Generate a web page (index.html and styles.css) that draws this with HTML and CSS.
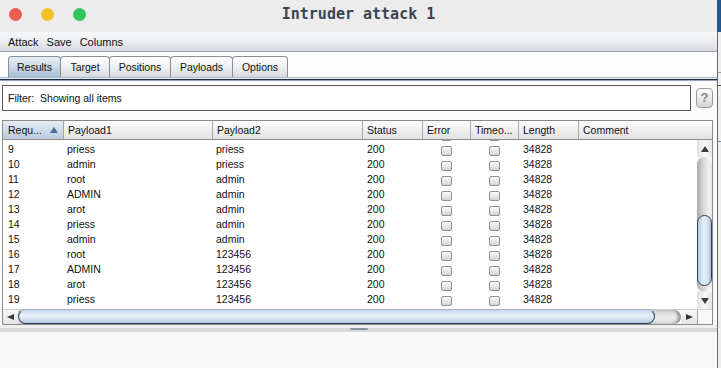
FILE: index.html
```html
<!DOCTYPE html>
<html>
<head>
<meta charset="utf-8">
<title>Intruder attack 1</title>
<link rel="stylesheet" href="styles.css">
</head>
<body>
<div class="screen">
  <div class="window">
    <header class="titlebar">
      <div class="lights">
        <span class="light red"></span>
        <span class="light yellow"></span>
        <span class="light green"></span>
      </div>
      <div class="title">Intruder attack 1</div>
      <div></div>
    </header>
    <nav class="menubar">
      <span>Attack</span><span>Save</span><span>Columns</span>
    </nav>
    <div class="tabbar">
      <div class="tab selected w-results">Results</div>
      <div class="tab w-target">Target</div>
      <div class="tab w-positions">Positions</div>
      <div class="tab w-payloads">Payloads</div>
      <div class="tab w-options">Options</div>
    </div>
    <div class="tabline"></div>
    <div class="filterrow">
      <div class="filterbox">Filter:&nbsp; Showing all items</div>
      <div class="help">?</div>
    </div>
    <div class="table">
      <div class="thead">
        <div class="th sorted">Requ...<span class="sortarrow"></span></div>
        <div class="th">Payload1</div>
        <div class="th">Payload2</div>
        <div class="th">Status</div>
        <div class="th">Error</div>
        <div class="th">Timeo...</div>
        <div class="th">Length</div>
        <div class="th">Comment</div>
      </div>
      <div class="tbody">
        <div class="rows">
          <div class="row first"><span></span><span></span><span></span><span></span><span class="cb"><i></i></span><span class="cb"><i></i></span><span></span><span></span></div>
          <div class="row"><span>9</span><span>priess</span><span>priess</span><span>200</span><span class="cb"><i></i></span><span class="cb"><i></i></span><span>34828</span><span></span></div>
          <div class="row"><span>10</span><span>admin</span><span>priess</span><span>200</span><span class="cb"><i></i></span><span class="cb"><i></i></span><span>34828</span><span></span></div>
          <div class="row"><span>11</span><span>root</span><span>admin</span><span>200</span><span class="cb"><i></i></span><span class="cb"><i></i></span><span>34828</span><span></span></div>
          <div class="row"><span>12</span><span>ADMIN</span><span>admin</span><span>200</span><span class="cb"><i></i></span><span class="cb"><i></i></span><span>34828</span><span></span></div>
          <div class="row"><span>13</span><span>arot</span><span>admin</span><span>200</span><span class="cb"><i></i></span><span class="cb"><i></i></span><span>34828</span><span></span></div>
          <div class="row"><span>14</span><span>priess</span><span>admin</span><span>200</span><span class="cb"><i></i></span><span class="cb"><i></i></span><span>34828</span><span></span></div>
          <div class="row"><span>15</span><span>admin</span><span>admin</span><span>200</span><span class="cb"><i></i></span><span class="cb"><i></i></span><span>34828</span><span></span></div>
          <div class="row"><span>16</span><span>root</span><span>123456</span><span>200</span><span class="cb"><i></i></span><span class="cb"><i></i></span><span>34828</span><span></span></div>
          <div class="row"><span>17</span><span>ADMIN</span><span>123456</span><span>200</span><span class="cb"><i></i></span><span class="cb"><i></i></span><span>34828</span><span></span></div>
          <div class="row"><span>18</span><span>arot</span><span>123456</span><span>200</span><span class="cb"><i></i></span><span class="cb"><i></i></span><span>34828</span><span></span></div>
          <div class="row"><span>19</span><span>priess</span><span>123456</span><span>200</span><span class="cb"><i></i></span><span class="cb"><i></i></span><span>34828</span><span></span></div>
        </div>
        <div class="vscroll">
          <div class="sbtn"><span class="tri up"></span></div>
          <div class="vtrack"><div class="vthumb"></div></div>
          <div class="sbtn"><span class="tri down"></span></div>
        </div>
      </div>
      <div class="hscroll">
        <div class="hbtn"><span class="tri left"></span></div>
        <div class="htrack"><div class="hthumb"></div></div>
        <div class="hbtn right"><span class="tri right"></span></div>
        <div class="corner"></div>
      </div>
    </div>
    <div class="gap"></div>
    <div class="splitter"><span class="grip"></span></div>
    <div class="lower"></div>
  </div>
  <div class="strip">
    <div class="strip-top"></div>
    <div class="strip-body">
      <div class="sline l1"></div>
      <div class="sline l2"></div>
      <div class="sline l3"></div>
    </div>
  </div>
</div>
</body>
</html>
```

FILE: styles.css
```css
* { box-sizing: border-box; }

body {
  margin: 0;
  background: #f7f7f7;
  font-family: "Liberation Sans", Arial, sans-serif;
  font-size: 10.5px;
  color: #111;
}

.screen {
  display: flex;
  width: 721px;
  height: 368px;
  overflow: hidden;
}

.window {
  width: 717px;
  flex: none;
  display: flex;
  flex-direction: column;
  background: #fbfbfb;
}

/* title bar */
.titlebar {
  height: 32px;
  flex: none;
  background: #ececec;
  display: grid;
  grid-template-columns: 1fr auto 1fr;
  align-items: start;
}
.lights {
  display: flex;
  gap: 19px;
  padding-left: 9px;
  padding-top: 8px;
}
.light {
  width: 13px;
  height: 13px;
  border-radius: 50%;
  display: block;
}
.light.red { background: #ec5a50; }
.light.yellow { background: #f4c124; }
.light.green { background: #2ec55f; }
.title {
  font-family: "DejaVu Sans Mono", "Liberation Mono", monospace;
  font-weight: bold;
  font-size: 15px;
  line-height: 18px;
  padding-top: 5px;
  color: #3c4452;
}

/* menu bar */
.menubar {
  height: 20px;
  flex: none;
  display: flex;
  align-items: center;
  gap: 8px;
  padding-left: 8px;
  font-size: 11px;
  background: linear-gradient(#f7f8f9, #e9ebee 55%, #d5d9de);
  border-bottom: 1px solid #9fa3a8;
}

/* tabs */
.tabbar {
  height: 25px;
  flex: none;
  display: flex;
  align-items: flex-end;
  padding-left: 8px;
  background: #fdfdfd;
}
.tab {
  height: 21px;
  line-height: 20px;
  text-align: center;
  border: 1px solid #8a8f96;
  border-bottom: none;
  border-radius: 4px 4px 0 0;
  background: linear-gradient(#ffffff, #eef0f2 50%, #d6d9de);
  margin-left: -1px;
}
.tab:first-child { margin-left: 0; }
.tab.selected {
  background: linear-gradient(#e8eff6, #cbd9e6 50%, #a8bfd4);
}
.w-results { width: 53px; }
.w-target { width: 50px; }
.w-positions { width: 62px; }
.w-payloads { width: 63px; }
.w-options { width: 56px; }

.tabline {
  height: 4px;
  flex: none;
  background: linear-gradient(#a9bcd0 0 1px, #e4eaf1 1px 2px, #1e2a3d 2px 3px, #97a2b0 3px 4px);
}

/* filter */
.filterrow {
  display: flex;
  align-items: center;
  gap: 5px;
  padding: 4px 4px 9px 2px;
  flex: none;
}
.filterbox {
  flex: 1;
  height: 26px;
  line-height: 24px;
  border: 1px solid #5a5a5a;
  background: #ffffff;
  padding-left: 5px;
}
.help {
  width: 17px;
  height: 20px;
  border: 1px solid #9c9c9c;
  border-radius: 4px;
  background: linear-gradient(#fdfdfd, #e6e6e6 60%, #d2d2d2);
  color: #858585;
  font-weight: bold;
  font-size: 13px;
  line-height: 18px;
  text-align: center;
}

/* table */
.table {
  margin-left: 2px;
  width: 711px;
  flex: none;
  border: 1px solid #8a8a8a;
  background: #ffffff;
  display: flex;
  flex-direction: column;
}
.thead {
  height: 19px;
  display: grid;
  grid-template-columns: 60px 149px 150px 60px 48px 48px 60px 134px;
  border-bottom: 1px solid #8e8e8e;
  background: linear-gradient(#fdfdfd, #efefef 50%, #e1e1e1);
}
.th {
  line-height: 18px;
  padding-left: 4px;
  border-left: 1px solid #a9a9a9;
  white-space: nowrap;
  overflow: hidden;
}
.th:first-child {
  border-left: none;
  padding-left: 5px;
}
.th.sorted {
  background: linear-gradient(#e4ecf4, #cfdcea 50%, #b9cbdd);
  display: flex;
  align-items: center;
}
.sortarrow {
  width: 0;
  height: 0;
  margin-left: 8px;
  border-left: 4px solid transparent;
  border-right: 4px solid transparent;
  border-bottom: 6px solid #3f6f9e;
}

.tbody {
  height: 169px;
  display: flex;
}
.rows {
  width: 694px;
  overflow: hidden;
}
.row {
  display: grid;
  grid-template-columns: 60px 149px 150px 60px 48px 48px 60px 119px;
  height: 15px;
  line-height: 15px;
}
.row.first { margin-top: -13px; }
.row span { padding-left: 5px; white-space: nowrap; }
.row span:nth-child(2), .row span:nth-child(3) { padding-left: 4px; }
.row .cb {
  padding-left: 0;
  display: flex;
  justify-content: center;
  align-items: flex-start;
}
.cb i {
  display: block;
  width: 11px;
  height: 10px;
  margin-top: 4px;
  border: 1px solid #8d939b;
  border-radius: 2px;
  background: linear-gradient(#fafafa, #e4e6e9 55%, #cfd3d8);
}

/* vertical scrollbar */
.vscroll {
  width: 15px;
  display: flex;
  flex-direction: column;
  background: #f6f6f6;
}
.sbtn {
  height: 17px;
  flex: none;
  display: flex;
  align-items: center;
  justify-content: center;
  background: linear-gradient(90deg, #e2e2e2, #f7f7f7 50%, #e6e6e6);
}
.vtrack {
  flex: 1;
  position: relative;
  border-radius: 8px;
  background: linear-gradient(90deg, #a9a9ab, #d6d6d8 40%, #f2f2f2 80%, #e4e4e4);
}
.vthumb {
  position: absolute;
  left: 0;
  right: 0;
  top: 58px;
  height: 71px;
  border: 1px solid #2b3c58;
  border-radius: 8px;
  background: linear-gradient(90deg, #b5cde3, #e6f0f8 45%, #d4e3f0 75%, #a8c2da);
}

/* horizontal scrollbar */
.hscroll {
  height: 15px;
  display: flex;
  border-top: 1px solid #d0d0d0;
}
.hbtn {
  width: 15px;
  flex: none;
  display: flex;
  align-items: center;
  justify-content: center;
  background: linear-gradient(#f7f7f7, #e4e4e4);
}
.hbtn.right { width: 16px; }
.htrack {
  flex: 1;
  position: relative;
  border-radius: 0 8px 8px 0;
  background: linear-gradient(#cfcfd1, #ececec 50%, #dadada);
  box-shadow: inset -4px 0 3px -1px rgba(0, 0, 0, 0.35);
}
.hthumb {
  position: absolute;
  left: 0;
  top: -1px;
  bottom: 0;
  width: 637px;
  border: 1px solid #2b3c58;
  border-top-color: #9fb3c8;
  border-radius: 8px;
  background: linear-gradient(#c6d8ea, #e9f1f8 45%, #d3e2ef 70%, #aec7de);
}
.corner {
  width: 15px;
  flex: none;
  border-left: 1px solid #a5a5a5;
  background: #f8f8f8;
}

.tri { display: block; width: 0; height: 0; }
.tri.up {
  border-left: 4px solid transparent;
  border-right: 4px solid transparent;
  border-bottom: 6px solid #3a3a3a;
}
.tri.down {
  border-left: 4px solid transparent;
  border-right: 4px solid transparent;
  border-top: 6px solid #3a3a3a;
}
.tri.left {
  border-top: 3px solid transparent;
  border-bottom: 3px solid transparent;
  border-right: 7px solid #3a3a3a;
}
.tri.right {
  border-top: 3px solid transparent;
  border-bottom: 3px solid transparent;
  border-left: 7px solid #3a3a3a;
}

/* bottom */
.gap {
  height: 3px;
  flex: none;
  background: #efefef;
}
.splitter {
  height: 4px;
  flex: none;
  background: #d9d9d9;
  display: flex;
  justify-content: center;
}
.grip {
  width: 18px;
  height: 2px;
  background: #8d939b;
  border-radius: 1px;
}
.lower {
  flex: 1;
  background: #f8f8f8;
}

/* background window strip */
.strip {
  width: 4px;
  flex: none;
  display: flex;
  flex-direction: column;
}
.strip-top {
  height: 32px;
  background: #24578d;
}
.strip-body {
  flex: 1;
  background: #eeeeee;
  border-left: 1px solid #6a6a6a;
  display: flex;
  flex-direction: column;
}
.sline { height: 1px; background: #9a9a9a; }
.l1 { margin-top: 40px; }
.l2 { margin-top: 12px; background: #555; }
.l3 { margin-top: 55px; background: #7b8ea4; }
```
